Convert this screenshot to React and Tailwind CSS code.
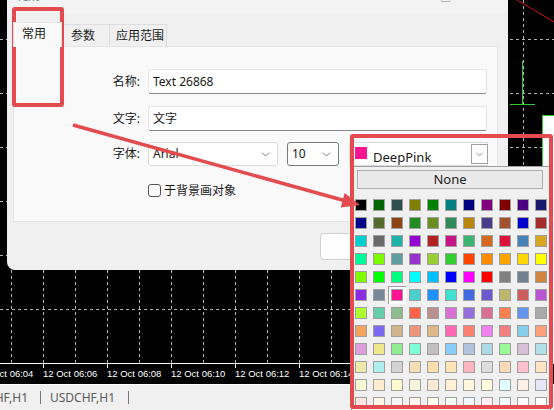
import React from 'react';
import { ChevronDown } from 'lucide-react';

// MetaTrader web colour palette, row by row as the picker lays it out
const PALETTE = [
  ['black', 'darkgreen', 'darkslategray', 'olive', 'green', 'teal', 'navy', 'purple', 'maroon', 'indigo', 'midnightblue'],
  ['darkblue', 'darkolivegreen', 'saddlebrown', 'forestgreen', 'olivedrab', 'seagreen', 'darkgoldenrod', 'darkslateblue', 'sienna', 'mediumblue', 'brown'],
  ['darkturquoise', 'dimgray', 'lightseagreen', 'darkviolet', 'firebrick', 'mediumvioletred', 'mediumseagreen', 'chocolate', 'crimson', 'steelblue', 'goldenrod'],
  ['mediumspringgreen', 'lawngreen', 'cadetblue', 'darkorchid', 'yellowgreen', 'limegreen', 'orangered', 'darkorange', 'orange', 'gold', 'yellow'],
  ['chartreuse', 'lime', 'springgreen', 'aqua', 'deepskyblue', 'blue', 'magenta', 'red', 'gray', 'slategray', 'peru'],
  ['blueviolet', 'lightslategray', 'deeppink', 'mediumturquoise', 'dodgerblue', 'turquoise', 'royalblue', 'slateblue', 'darkkhaki', 'indianred', 'mediumorchid'],
  ['greenyellow', 'mediumaquamarine', 'darkseagreen', 'tomato', 'rosybrown', 'orchid', 'mediumpurple', 'palevioletred', 'coral', 'cornflowerblue', 'darkgray'],
  ['sandybrown', 'mediumslateblue', 'tan', 'darksalmon', 'burlywood', 'hotpink', 'salmon', 'violet', 'lightcoral', 'skyblue', 'lightsalmon'],
  ['plum', 'khaki', 'lightgreen', 'aquamarine', 'silver', 'lightskyblue', 'lightsteelblue', 'lightblue', 'palegreen', 'thistle', 'powderblue'],
  ['palegoldenrod', 'paleturquoise', 'lightgray', 'wheat', 'navajowhite', 'moccasin', 'lightpink', 'gainsboro', 'peachpuff', 'pink', 'bisque'],
  ['lightgoldenrodyellow', 'blanchedalmond', 'lemonchiffon', 'beige', 'antiquewhite', 'papayawhip', 'cornsilk', 'lightyellow', 'lightcyan', 'linen', 'lavender'],
  ['mistyrose', 'oldlace', 'whitesmoke', 'seashell', 'ivory', 'honeydew', 'aliceblue', 'lavenderblush', 'mintcream', 'snow', 'white'],
];

const SELECTED = 'deeppink';
const TIMES = ['06:04', '06:06', '06:08', '06:10', '06:12', '06:14', '06:16', '06:18', '06:20'];

const ChartGrid = () => (
  <svg width="554" height="363" className="block">
    {Array.from({ length: 18 }, (_, k) => (
      <line key={`v${k}`} x1={11.5 + 32 * k} y1="0" x2={11.5 + 32 * k} y2="363" stroke="#b4b4b4" strokeDasharray="3 3" />
    ))}
    {Array.from({ length: 6 }, (_, k) => (
      <line key={`h${k}`} x1="0" y1={39.5 + 54 * k} x2="554" y2={39.5 + 54 * k} stroke="#b4b4b4" strokeDasharray="3 3" />
    ))}
    <line x1="522.5" y1="61" x2="522.5" y2="104" stroke="#33cc33" />
    <line x1="510" y1="104.5" x2="535" y2="104.5" stroke="#33cc33" />
    <rect x="542.5" y="115.5" width="20" height="260" fill="white" stroke="#33cc33" />
    <line x1="517" y1="0" x2="556" y2="23" stroke="#d01414" />
  </svg>
);

const Input = ({ value }) => (
  <div className="ml-[8px] w-[339px] h-[25px] flex items-center px-[4px] bg-white border border-[#e5e5e5] border-b-[#868686] rounded-[3px]">
    {value}
  </div>
);

const Dialog = () => (
  <div className="absolute left-[7px] top-0 w-[501px] h-[270px] flex flex-col rounded-b-[8px] bg-[#f0f0f0] overflow-hidden text-[12px] text-[#1a1a1a]">
    {/* title bar, mostly scrolled off the top */}
    <div className="h-[13px] bg-[#f3f3f3] overflow-hidden">
      <div className="-mt-[10px] h-[13px] leading-[13px] flex items-center pl-[9px] pr-[18px] text-[#888]">
        <span>Text</span>
        <span className="ml-auto text-[11px]">□</span>
        <span className="ml-[30px] text-[11px]">✕</span>
      </div>
    </div>

    {/* tabs */}
    <div className="h-[33px] flex items-end pl-[6px]">
      <div className="relative z-10 -mb-px w-[49px] h-[25px] pl-[8px] pt-[3px] leading-[16px] bg-[#f9f9f9] border border-b-0 border-[#e3e3e3]">
        常用
      </div>
      <div className="ml-px w-[47px] h-[22px] pl-[7px] flex items-center border border-b-0 border-[#dedede] bg-[#f0f0f0]">参数</div>
      <div className="w-[57px] h-[22px] pl-[6px] flex items-center border border-b-0 border-l-0 border-[#dedede] bg-[#f0f0f0]">应用范围</div>
    </div>

    {/* tab panel */}
    <div className="ml-[6px] w-[485px] h-[176px] flex flex-col bg-[#f9f9f9] border border-[#e3e3e3]">
      <div className="mt-[22px] flex items-center">
        <div className="w-[126px] text-right">名称:</div>
        <Input value="Text 26868" />
      </div>
      <div className="mt-[12px] flex items-center">
        <div className="w-[126px] text-right">文字:</div>
        <Input value="文字" />
      </div>
      <div className="mt-[11px] flex items-center h-[24px]">
        <div className="w-[126px] text-right">字体:</div>
        <div className="ml-[8px] w-[130px] h-[24px] flex items-center justify-between pl-[4px] pr-[5px] bg-white border border-[#dadada] rounded-[3px]">
          <span>Arial</span>
          <ChevronDown size={13} strokeWidth={1.4} className="text-[#555]" />
        </div>
        <div className="ml-[9px] w-[52px] h-[24px] flex items-center justify-between pl-[4px] pr-[5px] bg-white border border-[#7a7a7a] rounded-[3px]">
          <span>10</span>
          <ChevronDown size={13} strokeWidth={1.4} className="text-[#555]" />
        </div>
        <div className="ml-[10px] w-[139px] h-[24px] flex items-start pt-[3px] pl-[5px] bg-white border border-[#dadada]">
          <div className="mt-[1px] w-[12px] h-[12px]" style={{ backgroundColor: SELECTED }} />
          <span className="ml-[6px] text-[13px] leading-[18px] mt-[2px]">DeepPink</span>
          <div className="ml-auto mr-[-1px] -mt-[2px] w-[17px] h-[20px] flex items-center justify-center border border-[#a0a0a0] bg-white">
            <ChevronDown size={11} strokeWidth={1.4} className="text-[#555]" />
          </div>
        </div>
      </div>
      <div className="mt-[18px] flex items-center pl-[134px]">
        <div className="w-[13px] h-[13px] border border-[#555] rounded-[3px] bg-[#fbfbfb]" />
        <span className="ml-[3px] leading-[13px]">于背景画对象</span>
      </div>
    </div>

    {/* dialog buttons */}
    <div className="mt-[11px] flex pl-[313px] gap-[8px]">
      <div className="w-[92px] h-[27px] flex items-center justify-center bg-white border border-[#d0d0d0] rounded-[4px]">确定</div>
      <div className="w-[80px] h-[27px] flex items-center justify-center bg-white border border-[#d0d0d0] rounded-[4px]">取消</div>
    </div>
  </div>
);

const ColorPopup = () => (
  <div className="absolute left-[351px] top-[166px] w-[200px] h-[250px] bg-[#f0f0f0] border border-[#a0a0a0]">
    <div className="mt-[3px] ml-[5px] w-[186px] h-[19px] flex items-center justify-center text-[13px] text-[#222] bg-[#e9e9e9] border border-[#adadad]">
      None
    </div>
    <div className="mt-[7px] grid grid-cols-11 w-[198px]">
      {PALETTE.flat().map((c) => (
        <div
          key={c}
          className={
            c === SELECTED
              ? 'w-[18px] h-[18px] flex items-center justify-center bg-white shadow-[inset_1px_1px_0_#a0a0a0]'
              : 'w-[18px] h-[18px] flex items-center justify-center'
          }
        >
          <div className="w-[12px] h-[12px] border border-[#a0a0a0]" style={{ backgroundColor: c }} />
        </div>
      ))}
    </div>
  </div>
);

export default function App() {
  return (
    <div className="relative w-[554px] h-[410px] overflow-hidden bg-black font-['Noto_Sans','Noto_Sans_CJK_SC',sans-serif]">
      <ChartGrid />
      <div className="h-px bg-white" />
      <div className="h-[20px] flex -ml-[21px] overflow-hidden">
        {TIMES.map((t) => (
          <div key={t} className="w-[64px] shrink-0 flex flex-col">
            <div className="w-px h-[4px] bg-white" />
            <span className="text-[9.5px] leading-[11px] text-white whitespace-nowrap font-['Liberation_Sans',sans-serif]">
              12 Oct {t}
            </span>
          </div>
        ))}
      </div>
      <div className="h-px bg-white" />
      <div className="h-[25px] flex items-center bg-[#f0f0f0] text-[12px] text-[#5a5a5a]">
        <div className="w-[28px] flex justify-end overflow-hidden">
          <span className="shrink-0 whitespace-nowrap">USDCHF,H1</span>
        </div>
        <div className="ml-[12px] w-px h-[13px] bg-[#777]" />
        <span className="ml-[9px]">USDCHF,H1</span>
        <div className="ml-[13px] w-px h-[13px] bg-[#777]" />
      </div>

      <Dialog />
      <ColorPopup />

      {/* annotation marks */}
      <div className="absolute left-[12px] top-[7px] w-[52px] h-[100px] border-[4px] border-[#e34b4f] rounded-[3px]" />
      <div className="absolute left-[350px] top-[134px] w-[203px] h-[275px] border-[4px] border-[#e34b4f] rounded-[3px]" />
      <svg width="554" height="410" className="absolute left-0 top-0 pointer-events-none">
        <line x1="73" y1="125" x2="344" y2="200.5" stroke="#e34b4f" strokeWidth="3.5" />
        <polygon points="360,205 340.8,207.4 344.6,193" fill="#e34b4f" />
      </svg>
    </div>
  );
}
